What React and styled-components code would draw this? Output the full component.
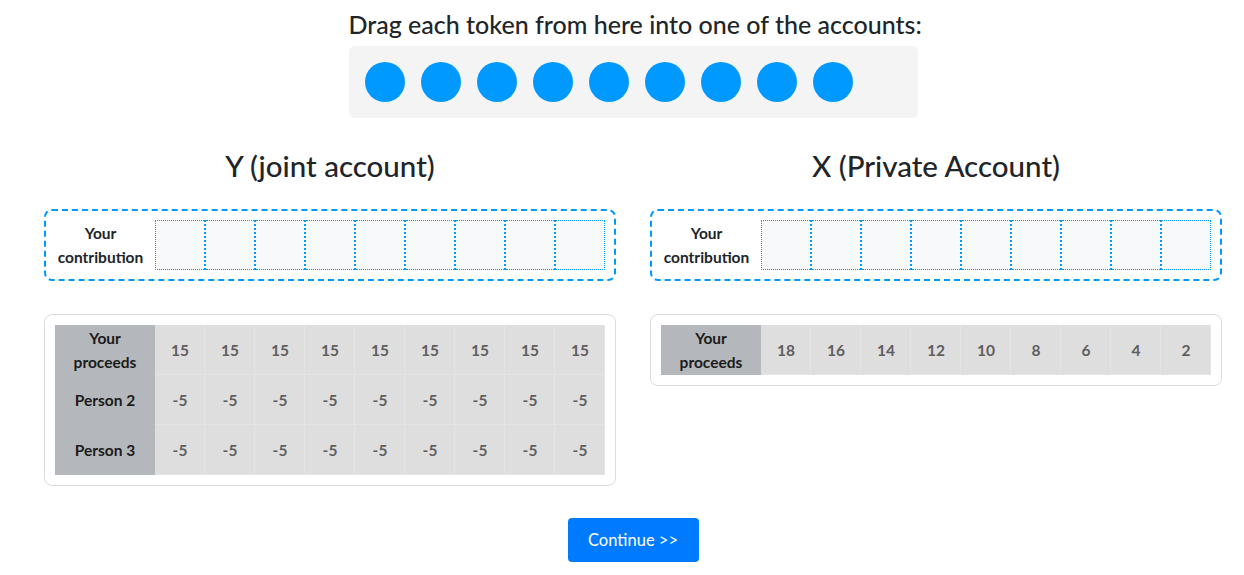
import styled, { createGlobalStyle } from 'styled-components'

const GlobalStyle = createGlobalStyle`
  body {
    margin: 0;
    font-family: "Segoe UI", Lato, "Noto Sans", sans-serif;
    color: #212529;
    background: #fff;
  }
`

const jointProceeds = [15, 15, 15, 15, 15, 15, 15, 15, 15]
const otherProceeds = [-5, -5, -5, -5, -5, -5, -5, -5, -5]
const privateProceeds = [18, 16, 14, 12, 10, 8, 6, 4, 2]

const Slots = () => (
  <SlotRow>
    {Array.from({ length: 9 }).map((_, i) => (
      <Slot key={i} />
    ))}
  </SlotRow>
)

const Row = ({ label, values }) => (
  <tr>
    <LabelCell>{label}</LabelCell>
    {values.map((v, i) => (
      <ValueCell key={i}>{v}</ValueCell>
    ))}
  </tr>
)

const Account = ({ title, children }) => (
  <Column>
    <AccountTitle>{title}</AccountTitle>
    <DropZone>
      <ZoneLabel>Your contribution</ZoneLabel>
      <Slots />
    </DropZone>
    <ProceedsCard>
      <ProceedsTable>
        <tbody>{children}</tbody>
      </ProceedsTable>
    </ProceedsCard>
  </Column>
)

const App = () => {
  return (
    <Page>
      <GlobalStyle />
      <TokenArea>
        <Instruction>Drag each token from here into one of the accounts:</Instruction>
        <TokenTray>
          {Array.from({ length: 9 }).map((_, i) => (
            <Token key={i} />
          ))}
        </TokenTray>
      </TokenArea>

      <Accounts>
        <Account title="Y (joint account)">
          <Row label="Your proceeds" values={jointProceeds} />
          <Row label="Person 2" values={otherProceeds} />
          <Row label="Person 3" values={otherProceeds} />
        </Account>
        <Account title="X (Private Account)">
          <Row label="Your proceeds" values={privateProceeds} />
        </Account>
      </Accounts>

      <Footer>
        <ContinueButton>Continue &gt;&gt;</ContinueButton>
      </Footer>
    </Page>
  )
}

// Styles

const Page = styled.div`
  padding: 9px 22px 0 44px;
`

const TokenArea = styled.div`
  width: 569px;
  margin: 0 auto;
`

const Instruction = styled.h4`
  margin: 0 0 7px;
  font-size: 25px;
  font-weight: 500;
  line-height: 30px;
  text-align: center;
  white-space: nowrap;
`

const TokenTray = styled.div`
  display: flex;
  gap: 16px;
  padding: 16px;
  background: #f4f4f4;
  border-radius: 6px;
`

const Token = styled.div`
  width: 40px;
  height: 40px;
  border-radius: 50%;
  background: #0099ff;
  cursor: grab;
`

const Accounts = styled.div`
  display: grid;
  grid-template-columns: 1fr 1fr;
  gap: 34px;
  margin-top: 31px;
`

const Column = styled.div`
  display: flex;
  flex-direction: column;
`

const AccountTitle = styled.h3`
  margin: 0 0 26px;
  font-size: 29.5px;
  font-weight: 500;
  line-height: 34px;
  text-align: center;
`

const DropZone = styled.div`
  display: flex;
  align-items: center;
  height: 72px;
  box-sizing: border-box;
  padding: 0 9px 0 0;
  border: 2px dashed #0099ff;
  border-radius: 8px;
`

const ZoneLabel = styled.div`
  width: 109px;
  font-size: 15.5px;
  font-weight: 700;
  line-height: 24px;
  text-align: center;
`

const SlotRow = styled.div`
  display: flex;
  flex: 1;
`

const Slot = styled.div`
  flex: 1;
  height: 50px;
  box-sizing: border-box;
  background: #f8f9fa;
  border: 1px dotted #0099ff;
  & + & {
    border-left: none;
  }
  &:not(:last-child) {
    border-right: 2px dotted #0099ff;
  }
`

const ProceedsCard = styled.div`
  margin-top: 33px;
  padding: 10px;
  border: 1px solid #dcdcdc;
  border-radius: 8px;
`

const ProceedsTable = styled.table`
  width: 100%;
  border-collapse: separate;
  border-spacing: 0;
  table-layout: fixed;
  font-size: 15.5px;
  font-weight: 700;
`

const LabelCell = styled.th`
  width: 100px;
  height: 50px;
  box-sizing: border-box;
  padding: 0 14px;
  background: #b4b8bc;
  color: #1b1b1b;
  line-height: 24px;
  text-align: center;
`

const ValueCell = styled.td`
  height: 50px;
  box-sizing: border-box;
  padding: 0;
  background: #dedede;
  color: #5f5f5f;
  text-align: center;
  box-shadow: inset -1px -1px 0 #e4e4e4;
`

const Footer = styled.div`
  display: flex;
  justify-content: center;
  margin-top: 32px;
`

const ContinueButton = styled.button`
  width: 131px;
  height: 44px;
  border: none;
  border-radius: 4px;
  background: #007bff;
  color: #fff;
  font-family: inherit;
  font-size: 16.5px;
  cursor: pointer;
`

export default App
